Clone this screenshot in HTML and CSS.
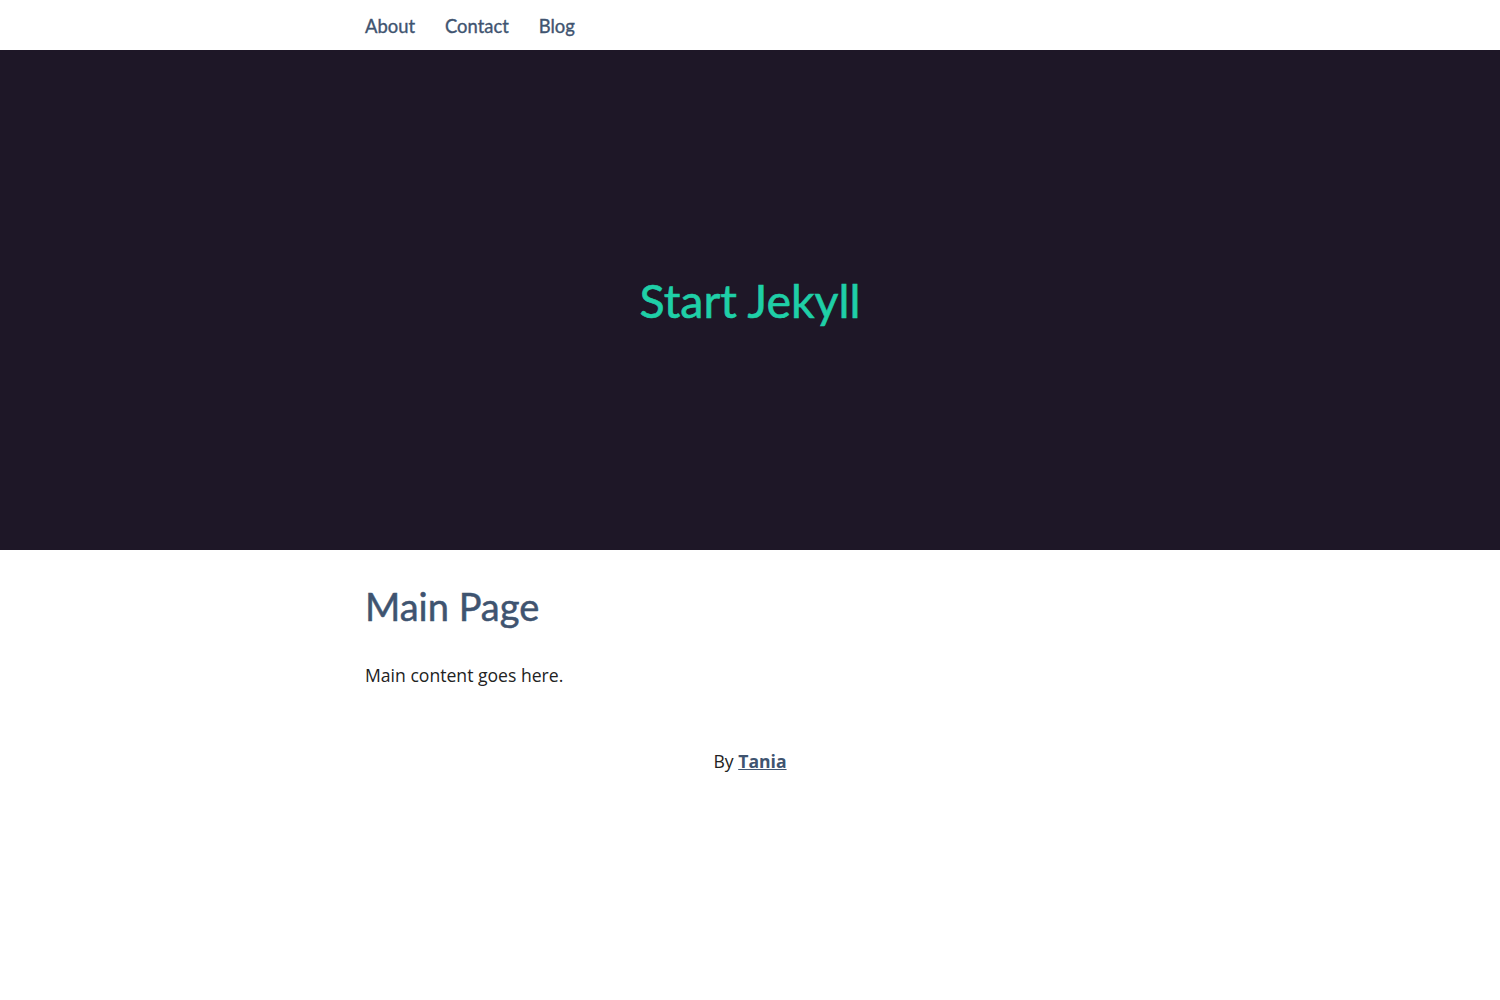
FILE: index.html
```html
<!DOCTYPE html>
<html lang="en">
<head>
<meta charset="utf-8">
<title>Start Jekyll</title>
<link rel="stylesheet" href="styles.css">
</head>
<body>
<nav class="nav">
  <div class="container nav-inner">
    <a class="nav-link" href="#">About</a>
    <a class="nav-link" href="#">Contact</a>
    <a class="nav-link" href="#">Blog</a>
  </div>
</nav>
<header class="hero">
  <h1 class="hero-title">Start Jekyll</h1>
</header>
<main class="container main">
  <h2 class="page-title">Main Page</h2>
  <p class="text">Main content goes here.</p>
</main>
<footer class="footer">
  <p>By <a class="footer-link" href="#">Tania</a></p>
</footer>
</body>
</html>
```

FILE: styles.css
```css
* { box-sizing: border-box; }
html, body { margin: 0; padding: 0; }
body {
  font-family: "Open Sans", "DejaVu Sans", sans-serif;
  font-size: 17.6px;
  color: #222;
  background: #fff;
}
.container {
  max-width: 800px;
  margin: 0 auto;
  padding: 0 15px;
}
.nav { height: 50px; background: #fff; }
.nav-inner {
  display: flex;
  align-items: center;
  height: 50px;
  gap: 30px;
}
.nav-link {
  font-family: "Lato", sans-serif;
  font-size: 18.4px;
  color: #3f5470;
  text-decoration: none;
  padding-top: 2px;
  -webkit-text-stroke: 0.35px #3f5470;
}
.hero {
  height: 500px;
  background: #1e1727;
  display: flex;
  align-items: center;
  justify-content: center;
}
.hero-title {
  margin: 0;
  font-family: "Lato", sans-serif;
  font-weight: 400;
  font-size: 46.5px;
  color: #1fcfa7;
  -webkit-text-stroke: 0.6px #1fcfa7;
}
.main { padding-top: 31px; }
.page-title {
  margin: 0;
  font-family: "Lato", sans-serif;
  font-weight: 400;
  font-size: 38px;
  color: #3f5470;
  line-height: 50px;
  -webkit-text-stroke: 0.5px #3f5470;
}
.text { margin: 30px 0 0; line-height: 28px; }
.footer { text-align: center; padding-top: 58px; }
.footer p { margin: 0; line-height: 28px; }
.footer-link { color: #3f5470; font-weight: 700; }
```
